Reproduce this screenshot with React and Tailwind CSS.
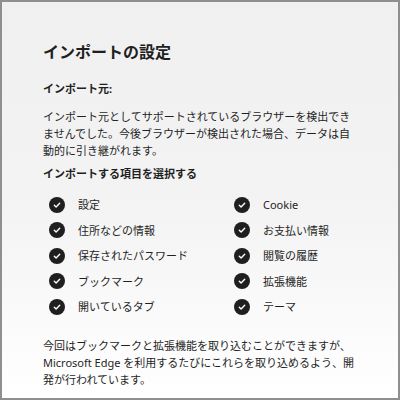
import React from "react";

const leftItems = ["設定", "住所などの情報", "保存されたパスワード", "ブックマーク", "開いているタブ"];
const rightItems = ["Cookie", "お支払い情報", "閲覧の履歴", "拡張機能", "テーマ"];

function CheckCircle() {
  return (
    <svg width="16" height="16" viewBox="0 0 16 16" className="shrink-0">
      <circle cx="8" cy="8" r="8" fill="#1f1f1f" />
      <path d="M5.3 8.2 L7.1 9.9 L10.7 6.2" fill="none" stroke="#fff" strokeWidth="1.4" strokeLinecap="round" strokeLinejoin="round" />
    </svg>
  );
}

function Item({ label }) {
  return (
    <div className="flex items-center h-[25.5px]">
      <CheckCircle />
      <span className="ml-[13px] text-[11px] leading-[17px] text-[#1f1f1f]">{label}</span>
    </div>
  );
}

export default function App() {
  return (
    <div className="w-[400px] h-[400px] overflow-hidden border-2 border-[#8f8f8f] bg-gradient-to-b from-[#f0f0f0] via-[#f3f3f3] to-white font-['Noto_Sans','Noto_Sans_CJK_JP',sans-serif] text-[#1f1f1f]">
      <div className="pl-[41px] pr-[41px] pt-[38px]">
        {/* Title */}
        <h1 className="text-[16px] leading-[24px] font-bold">インポートの設定</h1>

        {/* Source */}
        <div className="mt-[16px] text-[11px] leading-[17px] font-bold">インポート元:</div>
        <p className="mt-[11px] w-[314px] text-[11px] leading-[17px]">
          インポート元としてサポートされているブラウザーを検出できませんでした。今後ブラウザーが検出された場合、データは自動的に引き継がれます。
        </p>

        {/* Items */}
        <div className="mt-[6px] text-[11px] leading-[17px] font-bold">インポートする項目を選択する</div>
        <div className="mt-[10px] pl-[6px] grid grid-cols-[185px_1fr]">
          <div className="flex flex-col">
            {leftItems.map((t) => (
              <Item key={t} label={t} />
            ))}
          </div>
          <div className="flex flex-col">
            {rightItems.map((t) => (
              <Item key={t} label={t} />
            ))}
          </div>
        </div>

        {/* Note */}
        <p className="mt-[17px] w-[314px] text-[11px] leading-[17px]">
          今回はブックマークと拡張機能を取り込むことができますが、Microsoft Edge を利用するたびにこれらを取り込めるよう、開発が行われています。
        </p>
      </div>
    </div>
  );
}
